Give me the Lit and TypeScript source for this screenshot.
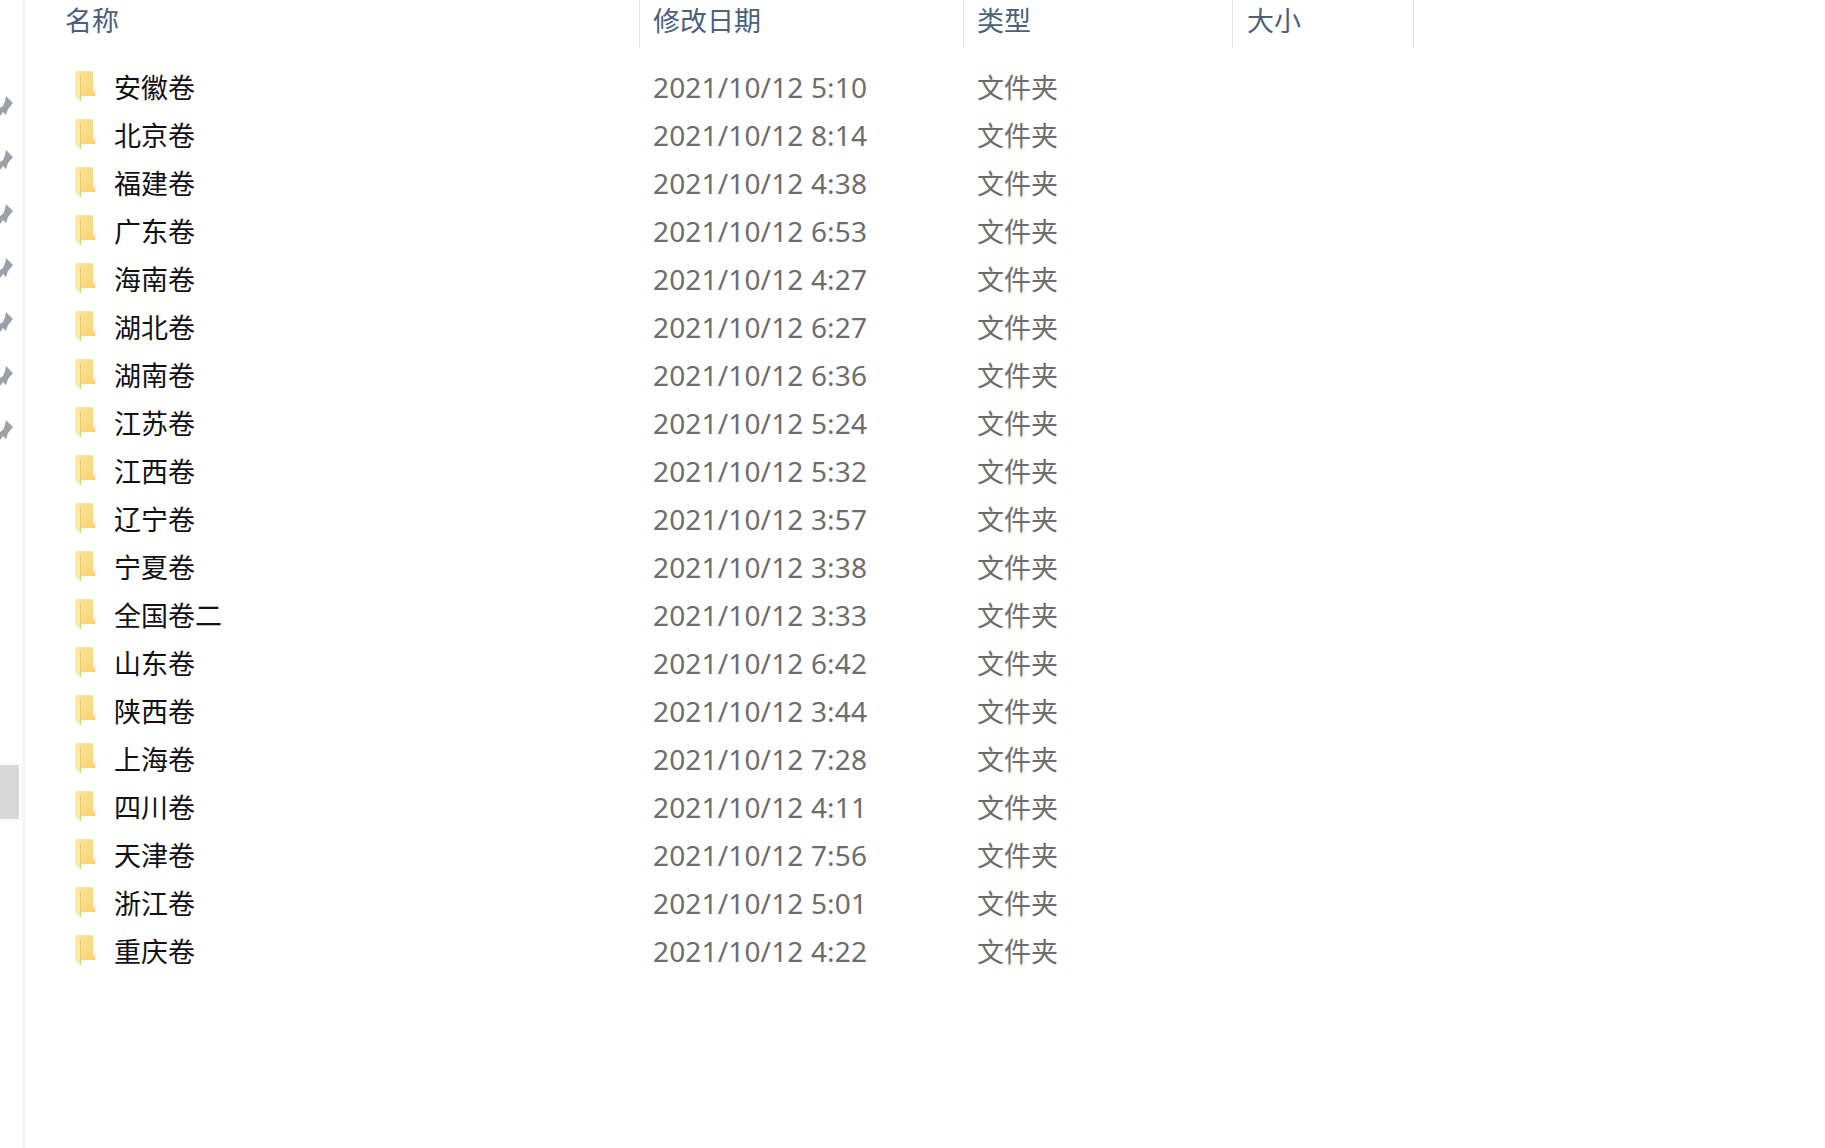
import { LitElement, html, css, svg } from "lit";
import { customElement } from "lit/decorators.js";

const rows: [string, string][] = [
  ["安徽卷", "5:10"], ["北京卷", "8:14"], ["福建卷", "4:38"], ["广东卷", "6:53"],
  ["海南卷", "4:27"], ["湖北卷", "6:27"], ["湖南卷", "6:36"], ["江苏卷", "5:24"],
  ["江西卷", "5:32"], ["辽宁卷", "3:57"], ["宁夏卷", "3:38"], ["全国卷二", "3:33"],
  ["山东卷", "6:42"], ["陕西卷", "3:44"], ["上海卷", "7:28"], ["四川卷", "4:11"],
  ["天津卷", "7:56"], ["浙江卷", "5:01"], ["重庆卷", "4:22"],
];

const folder = svg`<svg class="folder" viewBox="0 0 20 30" aria-hidden="true">
  <defs>
    <linearGradient id="fb" x1="0" y1="0" x2="1" y2="1">
      <stop offset="0" stop-color="#fbe6a2"/>
      <stop offset="1" stop-color="#f6d36f"/>
    </linearGradient>
  </defs>
  <path d="M1 0 L18 0 L18 20 L20 20 L20 25 L6 25 L6 8 Z" fill="url(#fb)"/>
  <path d="M0 0 L6 5 L6 30 L5 30 L0 25 Z" fill="#fde8a4"/>
  <path d="M5 4 L6 5 L6 30 L5 30 Z" fill="#e9c978"/>
</svg>`;

const pin = svg`<svg class="pin" viewBox="0 0 14 24" aria-hidden="true">
  <path d="M6 0 L13 7 L8 13 L6 19 L3 16 L0 20 L0 12 L3 10 L5 5 Z" fill="#99a2a8"/>
</svg>`;

@customElement("app-root")
export class AppRoot extends LitElement {
  static styles = css`
    :host {
      display: flex;
      width: 1825px;
      min-height: 1148px;
      background: #fff;
      font-family: "Noto Sans", "Noto Sans CJK SC", sans-serif;
      font-size: 27px;
      overflow: hidden;
    }
    .side {
      width: 22px;
      flex: none;
      box-sizing: border-box;
      padding-top: 96px;
      display: flex;
      flex-direction: column;
      gap: 30px;
      align-items: flex-start;
    }
    .pin { width: 14px; height: 24px; display: block; }
    .thumb {
      width: 19px;
      height: 54px;
      background: #d8d8d8;
      margin-top: 291px;
    }
    .rule { width: 3px; flex: none; background: #f5f5f5; }
    .main { flex: 1; min-width: 0; }
    .cols {
      display: grid;
      grid-template-columns: 615px 324px 269px 181px;
    }
    .head { height: 48px; margin-bottom: 15px; color: #4c607a; }
    .head div {
      box-sizing: border-box;
      border-right: 1px solid #e5e5e5;
      padding-left: 13px;
      line-height: 42px;
    }
    .head div:first-child { padding-left: 40px; }
    .head div:last-child { padding-left: 14px; }
    .row { height: 48px; align-items: center; line-height: 48px; }
    .name {
      display: flex;
      align-items: center;
      gap: 19px;
      padding-left: 50px;
      color: #111;
    }
    .name span { margin-top: 1px; }
    .folder { width: 20px; height: 30px; flex: none; margin-top: -3px; }
    .date, .type { padding-left: 13px; color: #6d6d6d; }
    .date { font-size: 28px; letter-spacing: 0.15px; margin-top: -2px; }
    .type { margin-top: 1px; }
  `;

  render() {
    return html`
      <div class="side">
        ${Array.from({ length: 7 }, () => pin)}
        <div class="thumb"></div>
      </div>
      <div class="rule"></div>
      <div class="main">
        <div class="cols head">
          <div>名称</div><div>修改日期</div><div>类型</div><div>大小</div>
        </div>
        ${rows.map(([n, t]) => html`
          <div class="cols row">
            <div class="name">${folder}<span>${n}</span></div>
            <div class="date">2021/10/12 ${t}</div>
            <div class="type">文件夹</div>
            <div></div>
          </div>`)}
      </div>
    `;
  }
}
